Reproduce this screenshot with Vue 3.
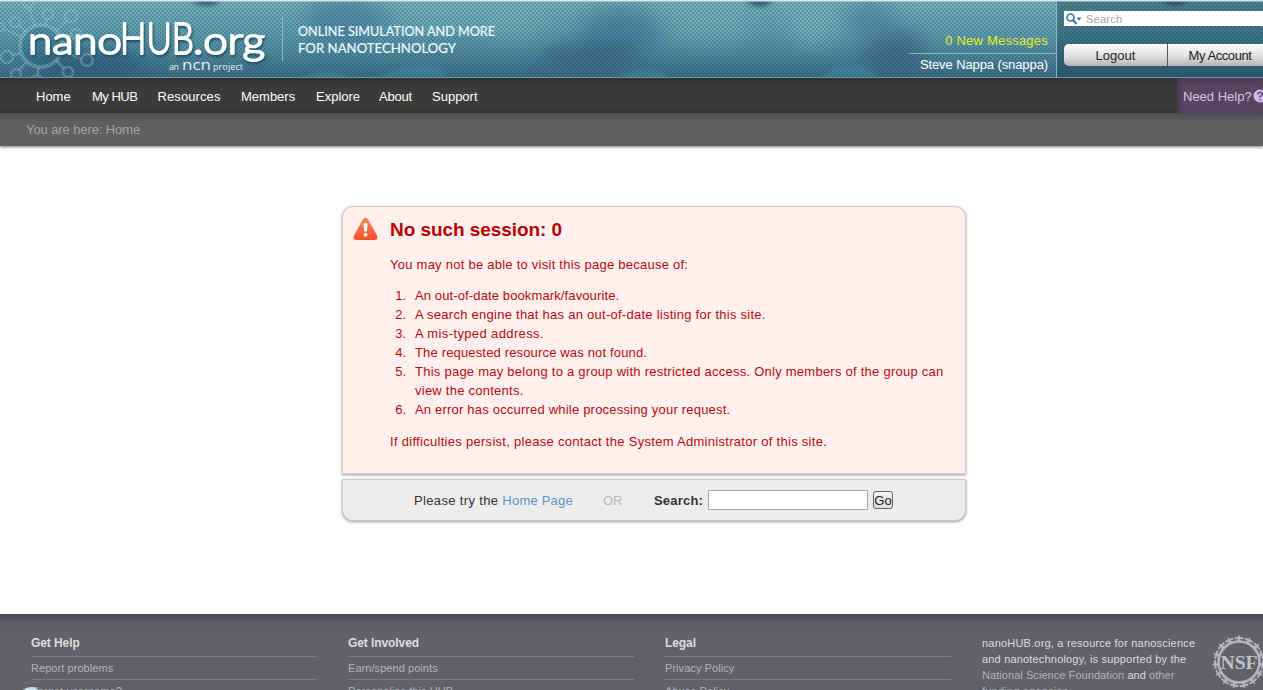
<script setup>
const nav = [
  { t: 'Home', w: 56 }, { t: 'My HUB', w: 65.5, c: 'tight' }, { t: 'Resources', w: 83.5, c: 'wide' }, { t: 'Members', w: 75 },
  { t: 'Explore', w: 63 }, { t: 'About', w: 53, c: 'snug' }, { t: 'Support', w: 60 },
]
const reasons = [
  { t: 'An out-of-date bookmark/favourite.', c: 'r1' },
  { t: 'A search engine that has an out-of-date listing for this site.', c: 'r2' },
  { t: 'A mis-typed address.', c: 'r3' },
  { t: 'The requested resource was not found.', c: 'r4' },
  { t: 'This page may belong to a group with restricted access. Only members of the group can view the contents.', c: 'r5' },
  { t: 'An error has occurred while processing your request.', c: 'r6' },
]
const columns = [
  { h: 'Get Help', l: ['Report problems', 'Forgot username?'] },
  { h: 'Get Involved', l: ['Earn/spend points', 'Personalize this HUB'] },
  { h: 'Legal', l: ['Privacy Policy', 'Abuse Policy'] },
]
const atoms = [[15, 22, 5], [48, 14, 5], [71, 16, 6], [76, 34, 5], [87, 60, 6], [68, 72, 5], [37, 80, 5], [16, 74, 5], [7, 57, 6], [0, 27, 4], [28, 3, 5]].map(([x, y, r]) => {
  const dx = x - 41, dy = y - 46, d = Math.hypot(dx, dy)
  return { x, y, r, d: `M${41 + dx * 21 / d} ${46 + dy * 21 / d}L${x - dx * r / d} ${y - dy * r / d}` }
})
const teeth = Array.from({ length: 15 }, (_, i) => i * 24)
</script>

<template>
  <div class="page">
    <header class="top">
      <svg class="backdrop" width="1263" height="78" viewBox="0 0 1263 78" preserveAspectRatio="none">
        <defs>
          <linearGradient id="sky" x1="0" y1="0" x2="0" y2="1">
            <stop offset="0" stop-color="#76b7bf" /><stop offset=".45" stop-color="#5f9eb0" /><stop offset="1" stop-color="#3a6d85" />
          </linearGradient>
          <pattern id="weave" width="4" height="4" patternUnits="userSpaceOnUse">
            <rect x="0" y="0" width="2" height="2" fill="#123a50" fill-opacity=".2" />
            <rect x="2" y="2" width="2" height="2" fill="#123a50" fill-opacity=".2" />
            <rect x="0" y="0" width="2" height="1" fill="#123a50" fill-opacity=".12" />
            <rect x="2" y="2" width="2" height="1" fill="#123a50" fill-opacity=".12" />
          </pattern>
          <filter id="soft" x="-30%" y="-30%" width="160%" height="160%"><feGaussianBlur stdDeviation="10" /></filter>
          <filter id="soft2"><feGaussianBlur stdDeviation="2" /></filter>
        </defs>
        <rect width="1263" height="78" fill="url(#sky)" />
        <g filter="url(#soft)">
          <ellipse cx="345" cy="20" rx="42" ry="24" fill="#427c9f" fill-opacity=".6" />
          <ellipse cx="620" cy="32" rx="40" ry="26" fill="#3c7596" fill-opacity=".6" />
          <ellipse cx="590" cy="56" rx="50" ry="12" fill="#345c78" fill-opacity=".6" />
          <ellipse cx="895" cy="52" rx="32" ry="24" fill="#365f7f" fill-opacity=".6" />
          <ellipse cx="870" cy="20" rx="25" ry="20" fill="#5288a6" fill-opacity=".7" />
          <ellipse cx="90" cy="65" rx="60" ry="14" fill="#275a79" fill-opacity=".7" />
          <ellipse cx="710" cy="25" rx="40" ry="18" fill="#78b8bd" fill-opacity=".6" />
          <ellipse cx="815" cy="25" rx="24" ry="20" fill="#7cbbc0" fill-opacity=".7" />
          <ellipse cx="510" cy="20" rx="34" ry="18" fill="#7bb7bb" fill-opacity=".6" />
          <ellipse cx="440" cy="14" rx="34" ry="12" fill="#79b7bb" fill-opacity=".6" />
        </g>
        <g filter="url(#soft2)">
          <path d="M745 0H775Q760 14 745 0Z M190 0H222Q206 12 190 0Z M1160 0H1190Q1175 12 1160 0Z" fill="#366783" />
          <path d="M375 78Q405 62 440 66Q450 75 440 78Z M615 78Q640 64 670 74L665 78Z M820 78Q835 62 865 66L880 78Z M300 78Q325 64 355 78Z" fill="#4688a7" fill-opacity=".75" />
        </g>
        <circle cx="41" cy="46" r="19" fill="#2c6888" fill-opacity=".3" />
        <g fill="none" stroke="#a8d4e0" stroke-opacity=".36" stroke-width="2.600">
          <circle cx="41" cy="46" r="21" stroke-width="4" />
          <template v-for="(a, i) in atoms" :key="i"><path :d="a.d" /><circle :cx="a.x" :cy="a.y" :r="a.r" /></template>
        </g>
        <rect x="1057" width="206" height="78" fill="#123e4e" fill-opacity=".42" />
        <rect width="1263" height="78" fill="url(#weave)" />
        <rect width="1263" height="1.5" fill="#dce2e3" />
        <rect y="77" width="1263" height="1" fill="#6d95a2" />
        <rect x="1056" y="1" width="1" height="77" fill="#8db6c4" />
        <rect x="909" y="53" width="147" height="1" fill="#8db6c4" />
        <rect x="282" y="16" width="1" height="45" fill="#8bbac7" />
      </svg>
      <svg class="brand" width="560" height="78">
        <text class="mark" y="53.500"><tspan class="low" x="28" textLength="94" lengthAdjust="spacingAndGlyphs">nano</tspan><tspan class="caps" x="120" textLength="74" lengthAdjust="spacingAndGlyphs">HUB</tspan><tspan class="low" x="193" textLength="72" lengthAdjust="spacingAndGlyphs">.org</tspan></text>
        <g class="ncn"><text x="169" y="70" textLength="10">an</text><text class="ncn-big" x="182" y="70" textLength="29" lengthAdjust="spacingAndGlyphs">ncn</text><text x="213" y="70" textLength="30">project</text></g>
        <g class="motto"><text x="298" y="36" textLength="197" lengthAdjust="spacingAndGlyphs">ONLINE SIMULATION AND MORE</text><text x="298" y="53" textLength="158" lengthAdjust="spacingAndGlyphs">FOR NANOTECHNOLOGY</text></g>
      </svg>
      <div class="user"><span class="messages">0 New Messages</span><span class="name">Steve Nappa (snappa)</span></div>
      <div class="account">
        <div class="search">
          <svg width="18" height="14" viewBox="0 0 18 14"><circle cx="5.500" cy="5.500" r="3.500" fill="none" stroke="#3678b5" stroke-width="1.700" /><path d="M8 8l3.500 4" stroke="#3678b5" stroke-width="2" /><path d="M11.500 5.500h5l-2.500 3z" fill="#3b6a9c" /></svg>
          <span>Search</span>
        </div>
        <div class="buttons"><a class="logout">Logout</a><a class="my">My Account</a></div>
      </div>
    </header>

    <nav class="nav">
      <a v-for="n in nav" :key="n.t" :class="n.c" :style="{ width: n.w + 'px' }">{{ n.t }}</a>
      <div class="help"><span>Need Help?</span>
        <svg width="14" height="14" viewBox="0 0 14 14"><circle cx="7" cy="7" r="6.500" fill="#d9b8ea" /><path d="M4.800 5.500Q4.800 3.400 7 3.400T9.200 5.300Q9.200 6.500 7 7.500V8.800M7 10v1.500" fill="none" stroke="#704d87" stroke-width="1.600" /></svg>
      </div>
    </nav>
    <div class="crumbs">You are here: Home</div>

    <main>
      <section class="error">
        <svg class="warn" width="26" height="24" viewBox="0 0 26 24">
          <defs><linearGradient id="w" x1="0" y1="0" x2="0" y2="1"><stop offset="0" stop-color="#f4876a" /><stop offset="1" stop-color="#fb4c22" /></linearGradient></defs>
          <path d="M10 2.200Q12.500 -1 15 2.200L24 18.500Q25.500 23 21.500 23H3.500Q-.500 23 1 18.500Z" fill="url(#w)" />
          <path d="M10.300 6.500Q12.500 5.300 14.700 6.500L13.900 14.500H11.100Z" fill="#fff" /><circle cx="12.500" cy="17.700" r="2" fill="#fff" />
        </svg>
        <div class="body">
          <h2>No such session: 0</h2>
          <p class="lead">You may not be able to visit this page because of:</p>
          <ol><li v-for="(r, i) in reasons" :key="i"><span class="num">{{ i + 1 }}.</span><span :class="r.c">{{ r.t }}</span></li></ol>
          <p class="last">If difficulties persist, please contact the System Administrator of this site.</p>
        </div>
      </section>
      <section class="options">
        <span class="try">Please try the <a>Home Page</a></span><span class="or">OR</span>
        <label>Search:</label><span class="field"></span><button>Go</button>
      </section>
    </main>

    <footer>
      <div v-for="c in columns" :key="c.h" class="col"><h3>{{ c.h }}</h3><a v-for="l in c.l" :key="l">{{ l }}</a></div>
      <p class="about"><span class="a1">nanoHUB.org, a resource for nanoscience</span><br><span class="a2">and nanotechnology, is supported by the</span><br><span class="a3"><a>National Science Foundation</a> and <a>other</a></span><br><a class="a1">funding agencies.</a></p>
      <svg class="nsf" width="56" height="56" viewBox="0 0 56 56">
        <circle cx="28" cy="28" r="20.500" fill="none" stroke="#b4b4ba" stroke-width="2.600" />
        <g v-for="a in teeth" :key="a" :transform="`rotate(${a} 28 28)`"><path d="M25 8L27 5L23.500 5.200L23.800 3.200L27 3L28 .3L29 3L32.200 3.200L32.500 5.200L29 5L31 8Z" fill="#b4b4ba" /></g>
        <text x="9.500" y="34.500" textLength="37" lengthAdjust="spacingAndGlyphs">NSF</text>
      </svg>
      <span class="bubble"></span>
    </footer>
  </div>
</template>

<style>
body { margin: 0; overflow: hidden; background: #fff; }
</style>
<style scoped>
.page { width: 1263px; height: 690px; overflow: hidden; position: relative; display: flex; flex-direction: column; font: 13px/19px "Liberation Sans", Arial, sans-serif; color: #333; }
.top { height: 78px; flex: none; position: relative; display: flex; justify-content: flex-end; }
.backdrop, .brand { position: absolute; left: 0; top: 0; }
.mark { font-family: Lato, sans-serif; font-weight: 300; fill: #fff; stroke: #fff; stroke-width: 2; stroke-linejoin: round; filter: drop-shadow(1px 2px 1px #1d4f66); }
.low { font-size: 37px; }
.caps { font-size: 43.5px; }
.ncn { font: 9px "Open Sans", sans-serif; fill: #e4f1f5; }
.ncn-big { font-size: 15px; }
.motto { font: 13.500px Lato, sans-serif; fill: #eefaff; stroke: #eefaff; stroke-width: .2; }
.user { position: relative; width: 148px; margin-right: 8px; display: flex; flex-direction: column; align-items: flex-end; padding-top: 31px; color: #fff; white-space: nowrap; }
.messages { color: #e3f218; margin-bottom: 5px; letter-spacing: .22px; }
.name { letter-spacing: -.1px; }
.account { position: relative; width: 207px; padding-left: 8px; box-sizing: border-box; overflow: hidden; }
.search { margin-top: 11px; height: 15px; background: #fff; display: flex; align-items: center; font-size: 11px; color: #a5a5a5; padding: 1px 0 0 1px; box-sizing: border-box; gap: 3px; letter-spacing: .25px; }
.buttons { display: flex; width: 214px; height: 22px; margin-top: 18px; line-height: 24px; text-align: center; color: #222; }
.buttons a { background: linear-gradient(#fff, #dcdcdc 60%, #b4b4b4); }
.logout { width: 103px; border-radius: 5px 0 0 5px; border-right: 1px solid #555; }
.my { width: 104px; letter-spacing: -.42px; }
.nav { height: 35px; flex: none; display: flex; padding-left: 36px; background: linear-gradient(#303030, #3b3b3b 8px, #3b3b3b 30px, #343434); color: #fff; line-height: 37px; position: relative; white-space: nowrap; }
.tight { letter-spacing: -.5px; }
.wide { letter-spacing: .1px; }
.snug { letter-spacing: -.2px; }
.help { margin-left: auto; width: 86px; overflow: hidden; background: #584561; color: #d7c1e2; display: flex; align-items: center; padding: 1px 0 0 6px; box-sizing: border-box; gap: 1px; box-shadow: inset 3px 3px 5px #48384f; }
.help svg { flex: none; }
.crumbs { height: 33px; flex: none; background: linear-gradient(#4c4c4c, #5f5f5f 9px, #606060); color: #a4a4a4; padding-left: 26px; line-height: 33px; box-sizing: border-box; box-shadow: 0 1px 3px #777; letter-spacing: -.1px; }
main { height: 468px; flex: none; box-sizing: border-box; padding: 60px 0 0 342px; }
.error { width: 624px; height: 268px; box-sizing: border-box; border: 1px solid #e5c8c3; border-radius: 11px 11px 0 0; background: #fff0ed; box-shadow: 0 1px 3px #999; display: flex; padding: 10px 0 0 10px; color: #b90b10; }
.warn { flex: none; margin-right: 11px; }
.body { width: 565px; }
h2 { font-size: 19px; line-height: 24px; margin: 1px 0 13px; color: #b90000; letter-spacing: -.06px; }
p { margin: 0; white-space: nowrap; }
.lead { letter-spacing: .25px; }
.last { letter-spacing: .29px; }
ol { list-style: none; margin: 12px 0 13px; padding: 0; }
li { display: flex; }
.num { width: 16px; text-align: right; margin-right: 9px; flex: none; }
.r1 { letter-spacing: .12px; }
.r2 { letter-spacing: .26px; }
.r3 { letter-spacing: .38px; }
.r4 { letter-spacing: .16px; }
.r5 { letter-spacing: .25px; width: 535px; }
.r6 { letter-spacing: .2px; }
.options { width: 624px; height: 42px; margin-top: 5px; box-sizing: border-box; border: 1px solid #ccc; border-radius: 0 0 11px 11px; background: #ededed; box-shadow: 0 1px 3px #999; display: flex; align-items: center; padding-left: 71px; }
.options a { color: #5b94c8; letter-spacing: .2px; }
.try { width: 189px; white-space: nowrap; letter-spacing: .35px; }
.or { color: #b8b8b8; width: 51px; }
label { font-weight: bold; width: 54px; letter-spacing: .2px; }
.field { width: 160px; height: 20px; box-sizing: border-box; border: 1px solid #aaa; background: #fff; margin-right: 5px; }
button { width: 20px; height: 18px; padding: 0; border: 1px solid #666; border-radius: 3px; background: linear-gradient(#f5f5f5, #ddd); font: 13px "Liberation Sans", Arial, sans-serif; color: #222; }
footer { flex: none; height: 76px; position: relative; display: flex; box-sizing: border-box; padding: 20px 0 0 31px; background: linear-gradient(#4b4b4e, #5e5e64 9px, #616167 18px); font-size: 11px; color: #ddd; overflow: hidden; }
.col { width: 286px; margin-right: 31px; flex: none; }
h3 { margin: 0; height: 22px; line-height: 19px; font-size: 12px; color: #ddd; border-bottom: 1px solid #7d7d82; letter-spacing: -.08px; }
.col a { display: block; height: 22px; line-height: 23px; border-bottom: 1px solid #7d7d82; color: #b3b3b8; letter-spacing: .06px; }
.about { line-height: 16px; width: 230px; flex: none; padding-top: 1px; }
.about a { color: #b3b3b8; }
.a1 { letter-spacing: .2px; }
.a2 { letter-spacing: .18px; }
.a3 { letter-spacing: .06px; }
.nsf { position: absolute; left: 1211px; top: 20px; }
.nsf text { font: bold 19px "Liberation Serif", serif; fill: #c0c0c5; }
.bubble { position: absolute; left: 19px; top: 73px; width: 24px; height: 24px; border-radius: 50%; background: #c9dfe9; }
</style>
